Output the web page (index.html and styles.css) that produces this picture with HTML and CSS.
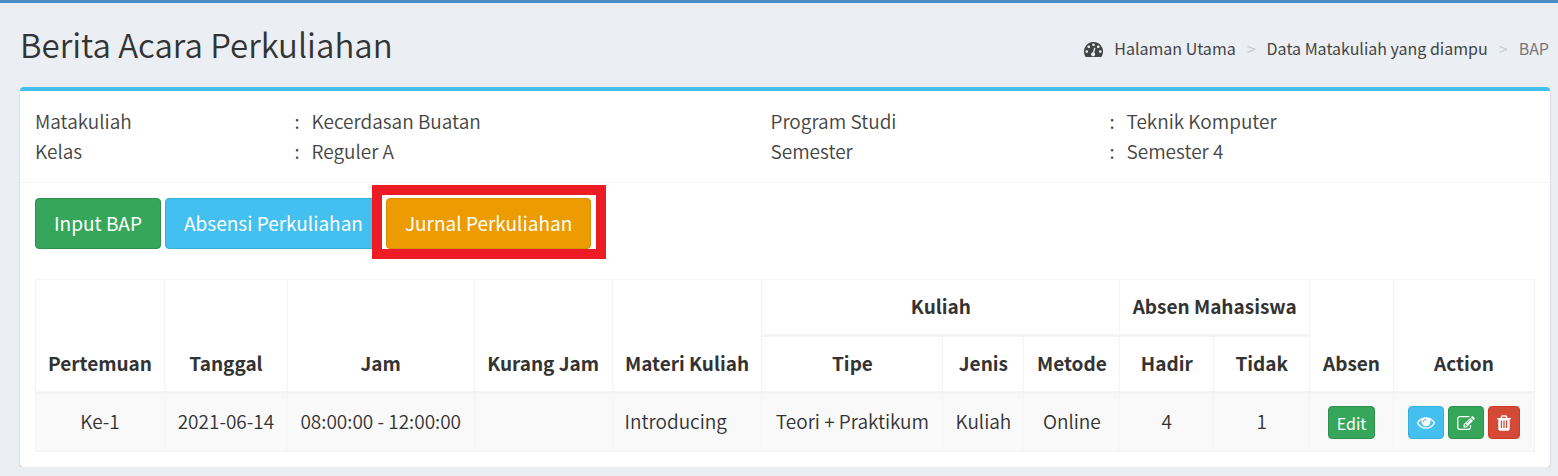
FILE: index.html
```html
<!DOCTYPE html>
<html lang="id">
<head>
<meta charset="utf-8">
<meta name="viewport" content="width=device-width, initial-scale=1">
<title>Berita Acara Perkuliahan</title>
<link rel="stylesheet" href="styles.css">
</head>
<body>
<header class="page-header">
  <h1 class="page-title">Berita Acara Perkuliahan</h1>
  <nav aria-label="Breadcrumb">
    <ol class="breadcrumb">
      <li><a href="#"><svg class="icon-dashboard" viewBox="0 0 1792 1408" aria-hidden="true"><path fill-rule="evenodd" d="M896 0a896 896 0 0 1 755 1380q-19 28-54 28H195q-35 0-54-28A896 896 0 0 1 896 0zM256 768a128 128 0 1 0 0 256 128 128 0 0 0 0-256zM448 320a128 128 0 1 0 0 256 128 128 0 0 0 0-256zM896 128a128 128 0 1 0 0 256 128 128 0 0 0 0-256zM1344 320a128 128 0 1 0 0 256 128 128 0 0 0 0-256zM1536 768a128 128 0 1 0 0 256 128 128 0 0 0 0-256zM1022 531q-25-7-48 6t-29 39L844 958q-60 5-107 43.500t-63 98.500q-20 77 20 146t117 89 146-20 89-117q16-60-6-117t-72-91l101-382q6-26-7-48.500t-40-28.500z"/></svg>Halaman Utama</a></li>
      <li><a href="#">Data Matakuliah yang diampu</a></li>
      <li class="current" aria-current="page">BAP</li>
    </ol>
  </nav>
</header>
<main class="box">
  <section class="box-header">
    <table class="info">
      <colgroup><col class="info-label-a"><col class="info-colon"><col class="info-value-a"><col class="info-label-b"><col class="info-colon"><col></colgroup>
      <tbody>
        <tr><td>Matakuliah</td><td>:</td><td>Kecerdasan Buatan</td><td>Program Studi</td><td>:</td><td>Teknik Komputer</td></tr>
        <tr><td>Kelas</td><td>:</td><td>Reguler A</td><td>Semester</td><td>:</td><td>Semester 4</td></tr>
      </tbody>
    </table>
  </section>
  <section class="box-body">
    <div class="toolbar">
      <button type="button" class="btn btn-success">Input BAP</button>
      <button type="button" class="btn btn-info">Absensi Perkuliahan</button>
      <span class="highlight"><button type="button" class="btn btn-warning">Jurnal Perkuliahan</button></span>
    </div>
    <table class="records">
      <colgroup><col class="c-no"><col class="c-date"><col class="c-time"><col class="c-less"><col class="c-topic"><col class="c-type"><col class="c-kind"><col class="c-method"><col class="c-present"><col class="c-absent"><col class="c-edit"><col class="c-action"></colgroup>
      <thead>
        <tr>
          <th rowspan="2">Pertemuan</th><th rowspan="2">Tanggal</th><th rowspan="2">Jam</th><th rowspan="2">Kurang Jam</th><th rowspan="2">Materi Kuliah</th>
          <th colspan="3">Kuliah</th><th colspan="2">Absen Mahasiswa</th><th rowspan="2">Absen</th><th rowspan="2">Action</th>
        </tr>
        <tr><th>Tipe</th><th>Jenis</th><th>Metode</th><th>Hadir</th><th>Tidak</th></tr>
      </thead>
      <tbody>
        <tr>
          <td>Ke-1</td><td>2021-06-14</td><td>08:00:00 - 12:00:00</td><td></td><td class="text-left">Introducing</td><td>Teori + Praktikum</td><td>Kuliah</td><td>Online</td><td>4</td><td>1</td>
          <td><div class="actions"><button type="button" class="btn btn-sm btn-success">Edit</button></div></td>
          <td><div class="actions">
            <button type="button" class="btn btn-sm btn-info" aria-label="Lihat"><svg class="icon-eye" viewBox="0 0 1792 1152" aria-hidden="true"><path fill-rule="evenodd" d="M1664 576q-152-236-381-353 61 104 61 225 0 185-131.500 316.500T896 896 579.500 764.500 448 448q0-121 61-225-229 117-381 353 133 205 333.500 326.500T896 1024t434.500-121.500T1664 576zM944 192q0-20-14-34t-34-14q-125 0-214.500 89.500T592 448q0 20 14 34t34 14 34-14 14-34q0-86 61-147t147-61q20 0 34-14t14-34zm848 384q0 34-20 69-140 230-376.500 368.500T896 1152t-499.500-139T20 645Q0 610 0 576t20-69q140-229 376.500-368T896 0t499.500 139T1772 507q20 35 20 69z"/></svg></button>
            <button type="button" class="btn btn-sm btn-success" aria-label="Ubah"><svg class="icon-edit" viewBox="0 0 1784 1410" aria-hidden="true"><path fill-rule="evenodd" d="M888 1058l116-116-152-152-116 116v56h96v96h56zm440-720q-16-16-33 1L945 689q-17 17-1 33t33-1l350-350q17-17 1-33zm80 594v190q0 119-84.500 203.500T1120 1410H288q-119 0-203.500-84.500T0 1122V290Q0 171 84.500 86.500T288 2h832q63 0 117 25 15 7 18 23 3 17-9 29l-49 49q-14 14-32 8-23-6-45-6H288q-66 0-113 47t-47 113v832q0 66 47 113t113 47h832q66 0 113-47t47-113V996q0-13 9-22l64-64q15-15 35-7t20 29zm-96-738l288 288-672 672H640V866zm444 132l-92 92-288-288 92-92q28-28 68-28t68 28l152 152q28 28 28 68t-28 68z"/></svg></button>
            <button type="button" class="btn btn-sm btn-danger" aria-label="Hapus"><svg class="icon-trash" viewBox="0 0 1408 1536" aria-hidden="true"><path fill-rule="evenodd" d="M512 1248V544q0-32-32-32h-64q-32 0-32 32v704q0 32 32 32h64q32 0 32-32zm256 0V544q0-32-32-32h-64q-32 0-32 32v704q0 32 32 32h64q32 0 32-32zm256 0V544q0-32-32-32h-64q-32 0-32 32v704q0 32 32 32h64q32 0 32-32zM480 256h448l-48-117q-7-9-17-11H546q-10 2-17 11zm928 32v64q0 32-32 32h-96v948q0 83-47 143.500T1120 1536H288q-66 0-113-58.500T128 1336V384H32q-32 0-32-32v-64q0-32 32-32h309l70-167q15-37 54-63t79-26h320q40 0 79 26t54 63l70 167h309q32 0 32 32z"/></svg></button>
          </div></td>
        </tr>
      </tbody>
    </table>
  </section>
</main>
</body>
</html>
```
FILE: styles.css
```css
* { box-sizing: border-box; }

body {
  margin: 0;
  border-top: 3px solid #4b8dc2;
  background: #ebeff4;
  color: #333;
  font-family: "Source Sans Pro", "Noto Sans CJK SC", sans-serif;
  font-size: 19px;
  font-weight: 350;
  line-height: 30px;
}

.page-header {
  display: flex;
  flex-wrap: wrap;
  align-items: center;
  justify-content: space-between;
  padding: 20px 9px 22px 20px;
}

.page-title {
  margin: 0;
  font-size: 33px;
  font-weight: 350;
  line-height: 42px;
}

.breadcrumb {
  display: flex;
  flex-wrap: wrap;
  margin: 0;
  padding: 8px 0 0;
  list-style: none;
  font-size: 16px;
  font-weight: 400;
}

.breadcrumb li + li::before {
  content: ">";
  padding: 0 11px;
  color: #ccc;
}

.breadcrumb a { color: #444; text-decoration: none; }
.breadcrumb .current { color: #777; }

.box {
  margin: 0 8px 0 20px;
  border-top: 4px solid #43c0f0;
  border-radius: 4px;
  background: #fff;
  box-shadow: 0 1px 2px rgba(0, 0, 0, 0.2);
}

.box-header {
  padding: 15px 15px 16px;
  border-bottom: 1px solid #f4f4f4;
  color: #444;
}

.box-body { padding: 15px; }

table {
  width: 100%;
  border-collapse: collapse;
}

.info { table-layout: fixed; }
.info td { padding: 0; }
.info-label-a { width: 17.3%; }
.info-value-a { width: 30.6%; }
.info-label-b { width: 22.6%; }
.info-colon { width: 17px; }

.toolbar {
  display: flex;
  flex-wrap: wrap;
  gap: 4px;
  margin-bottom: 30px;
}

.btn {
  border: 1px solid;
  border-radius: 4px;
  padding: 9px 18px 10px;
  color: #fff;
  font: inherit;
  font-weight: 400;
  cursor: pointer;
}

.btn-success { background: #35a65a; border-color: #2f904d; }
.btn-info { background: #43c0f0; border-color: #3aaedb; }
.btn-warning { background: #ec9b00; border-color: #d98e00; }
.btn-danger { background: #d54a36; border-color: #cf3922; }

.highlight { position: relative; }

.highlight::after {
  content: "";
  position: absolute;
  inset: -13px -15px -10px -14px;
  border: 10px solid #ed1c24;
  pointer-events: none;
}

.records th,
.records td {
  padding: 12px;
  border: 1px solid #f4f4f4;
  text-align: center;
}

.records th {
  padding: 11px 12px 13px;
  border-bottom-width: 3px;
  font-weight: 700;
  vertical-align: bottom;
  white-space: nowrap;
}

.records td { vertical-align: top; }
.records .text-left { text-align: left; }
.records tbody tr { background: #f9f9f9; }

.c-no { width: 8.6%; }
.c-date { width: 8.2%; }
.c-time { width: 12.5%; }
.c-less { width: 9.2%; }
.c-topic { width: 10%; }
.c-type { width: 12.1%; }
.c-kind { width: 5.4%; }
.c-method { width: 6.4%; }
.c-present { width: 6.2%; }
.c-absent { width: 6.4%; }
.c-edit { width: 5.6%; }
.c-action { width: 9.4%; }

.actions {
  display: flex;
  justify-content: center;
  gap: 4px;
}

.btn-sm {
  display: flex;
  align-items: center;
  height: 33px;
  padding: 0 8px;
  font-size: 16px;
}

svg { fill: currentColor; }
.icon-dashboard { width: 19px; height: 15px; margin-right: 11px; vertical-align: -2px; }
.icon-eye { width: 18px; height: 12px; }
.icon-edit { width: 18px; height: 14px; }
.icon-trash { width: 14px; height: 16px; }
```
